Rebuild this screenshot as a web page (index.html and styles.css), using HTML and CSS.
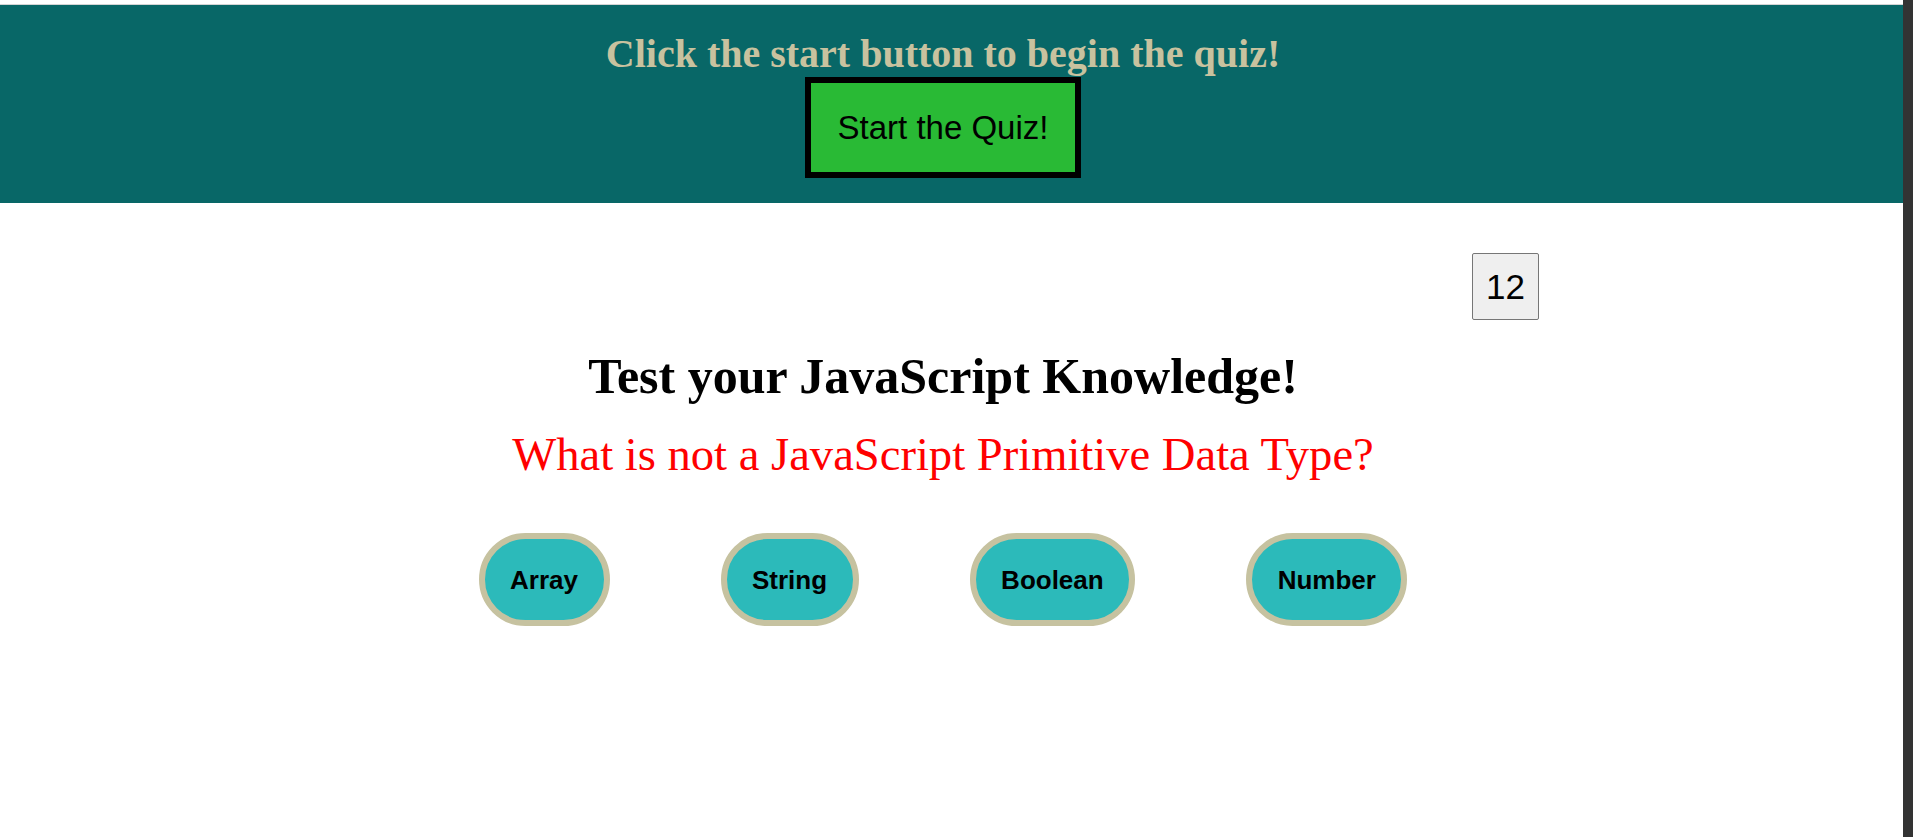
FILE: index.html
```html
<!DOCTYPE html>
<html lang="en">
<head>
<meta charset="utf-8">
<title>JavaScript Quiz</title>
<link rel="stylesheet" href="styles.css">
</head>
<body>
<div class="page">
  <div class="topline"></div>
  <header class="header">
    <h1 class="intro">Click the start button to begin the quiz!</h1>
    <button class="start-btn">Start the Quiz!</button>
  </header>
  <main class="main">
    <div class="timer-row">
      <button class="timer">12</button>
    </div>
    <h2 class="title">Test your JavaScript Knowledge!</h2>
    <p class="question">What is not a JavaScript Primitive Data Type?</p>
    <div class="answers">
      <button class="answer">Array</button>
      <button class="answer">String</button>
      <button class="answer">Boolean</button>
      <button class="answer">Number</button>
    </div>
  </main>
</div>
<div class="edge"></div>
</body>
</html>
```

FILE: styles.css
```css
html, body {
  margin: 0;
  padding: 0;
  height: 100%;
}

body {
  display: flex;
  background: #ffffff;
  font-family: "Liberation Serif", "Times New Roman", serif;
  overflow: hidden;
}

.page {
  flex: 1;
  display: flex;
  flex-direction: column;
}

.edge {
  width: 10px;
  background: #333333;
}

.topline {
  height: 4px;
  background: #ffffff;
  border-bottom: 1px solid #d4d4d4;
}

.header {
  background: #086767;
  padding: 26px 17px 25px 0;
  display: flex;
  flex-direction: column;
  align-items: center;
}

.intro {
  margin: 0;
  font-size: 40px;
  font-weight: bold;
  line-height: 46px;
  color: #c8c29f;
}

.start-btn {
  font-family: "Liberation Sans", Arial, sans-serif;
  font-size: 33px;
  line-height: 37px;
  color: #000000;
  background: #29ba35;
  border: 6px solid #000000;
  padding: 26px 26.5px;
  cursor: pointer;
}

.main {
  padding-right: 17px;
  display: flex;
  flex-direction: column;
  align-items: center;
}

.timer-row {
  width: 1192px;
  display: flex;
  justify-content: flex-end;
  margin-top: 50px;
}

.timer {
  width: 67px;
  height: 67px;
  padding: 0;
  font-family: "Liberation Sans", Arial, sans-serif;
  font-size: 35px;
  color: #000000;
  background: #efefef;
  border: 1px solid #767676;
  border-radius: 2px;
}

.title {
  margin: 28px 0 0;
  font-size: 50px;
  font-weight: bold;
  line-height: 56px;
  color: #000000;
}

.question {
  margin: 21.5px 0 0;
  font-size: 46.6px;
  line-height: 56px;
  color: #ff0000;
}

.answers {
  display: flex;
  gap: 111px;
  margin-top: 51.7px;
}

.answer {
  font-family: "Liberation Sans", Arial, sans-serif;
  font-size: 26px;
  font-weight: bold;
  line-height: 30px;
  color: #000000;
  background: #2cbaba;
  border: 6px solid #c6c2a0;
  border-radius: 50px;
  padding: 25.5px 25.5px;
  cursor: pointer;
}
```
